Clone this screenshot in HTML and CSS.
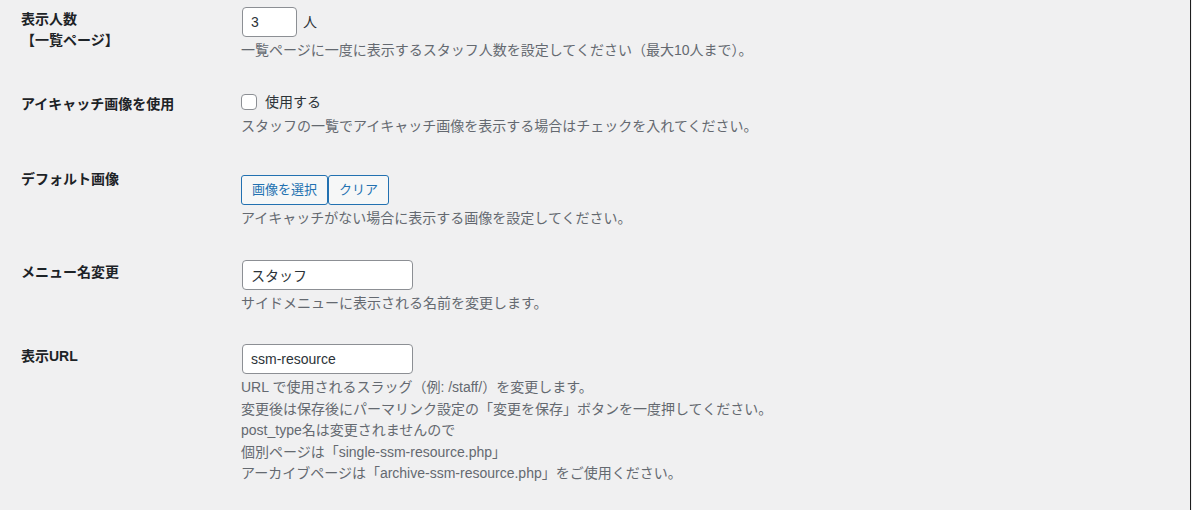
FILE: index.html
```html
<!DOCTYPE html>
<html lang="ja">
<head>
<meta charset="utf-8">
<title>設定</title>
<link rel="stylesheet" href="styles.css">
</head>
<body>
<div class="frame">
  <table class="form-table">
    <tr>
      <th>表示人数<br>【一覧ページ】</th>
      <td>
        <div class="field">
          <input type="number" class="small-text" value="3">
          <span class="unit">人</span>
        </div>
        <p class="description">一覧ページに一度に表示するスタッフ人数を設定してください（最大10人まで）。</p>
      </td>
    </tr>
    <tr>
      <th>アイキャッチ画像を使用</th>
      <td>
        <label class="field check">
          <input type="checkbox" class="checkbox">
          <span>使用する</span>
        </label>
        <p class="description">スタッフの一覧でアイキャッチ画像を表示する場合はチェックを入れてください。</p>
      </td>
    </tr>
    <tr>
      <th>デフォルト画像</th>
      <td>
        <div class="preview"></div>
        <div class="buttons">
          <button type="button" class="button">画像を選択</button>
          <button type="button" class="button">クリア</button>
        </div>
        <p class="description">アイキャッチがない場合に表示する画像を設定してください。</p>
      </td>
    </tr>
    <tr>
      <th>メニュー名変更</th>
      <td>
        <div class="field">
          <input type="text" class="regular-text" value="スタッフ">
        </div>
        <p class="description">サイドメニューに表示される名前を変更します。</p>
      </td>
    </tr>
    <tr>
      <th>表示URL</th>
      <td>
        <div class="field">
          <input type="text" class="regular-text" value="ssm-resource">
        </div>
        <p class="description">URL で使用されるスラッグ（例: /staff/）を変更します。<br>変更後は保存後にパーマリンク設定の「変更を保存」ボタンを一度押してください。<br>post_type名は変更されませんので<br>個別ページは「single-ssm-resource.php」<br>アーカイブページは「archive-ssm-resource.php」をご使用ください。</p>
      </td>
    </tr>
  </table>
</div>
</body>
</html>
```

FILE: styles.css
```css
html, body {
  margin: 0;
  padding: 0;
  background: #f0f0f1;
}

body {
  font-family: "Liberation Sans", "Noto Sans CJK JP", sans-serif;
  font-size: 14px;
  color: #3c434a;
}

.frame {
  box-sizing: border-box;
  width: 1191px;
  height: 510px;
  overflow: hidden;
  padding-left: 21px;
  border-right: 1px solid #1d1d1d;
}

.form-table {
  border-collapse: collapse;
  margin-top: -8px;
  width: 100%;
}

.form-table th {
  width: 200px;
  padding: 17px 10px 15px 0;
  text-align: left;
  vertical-align: top;
  font-weight: 700;
  line-height: 1.5;
  color: #1d2327;
}

.form-table td {
  padding: 15px 10px;
  vertical-align: top;
  line-height: 1.5;
}

.field {
  display: flex;
  align-items: center;
  gap: 5px;
  min-height: 21px;
  color: #2c3338;
}

.check {
  gap: 8px;
}

input.small-text,
input.regular-text {
  box-sizing: border-box;
  height: 30px;
  margin: 0 1px;
  padding: 0 8px;
  border: 1px solid #8c8f94;
  border-radius: 4px;
  background: #fff;
  color: #2c3338;
  font-family: inherit;
  font-size: 14px;
}

input.small-text {
  width: 55px;
  -moz-appearance: textfield;
}

input.small-text::-webkit-inner-spin-button,
input.small-text::-webkit-outer-spin-button {
  -webkit-appearance: none;
  margin: 0;
}

input.regular-text {
  width: 171px;
}

.checkbox {
  -webkit-appearance: none;
  appearance: none;
  box-sizing: border-box;
  width: 16px;
  height: 16px;
  margin: 0;
  border: 1px solid #8c8f94;
  border-radius: 4px;
  background: #fff;
}

.preview {
  height: 8px;
}

.buttons {
  display: flex;
}

.button {
  box-sizing: border-box;
  height: 30px;
  margin: 0;
  padding: 0 10px;
  border: 1px solid #2271b1;
  border-radius: 3px;
  background: #f6f7f7;
  color: #2271b1;
  font-family: inherit;
  font-size: 13px;
  line-height: 28px;
  cursor: pointer;
}

.description {
  margin: 3px 0 0;
  color: #646970;
  font-size: 14px;
  line-height: 21.5px;
}
```
